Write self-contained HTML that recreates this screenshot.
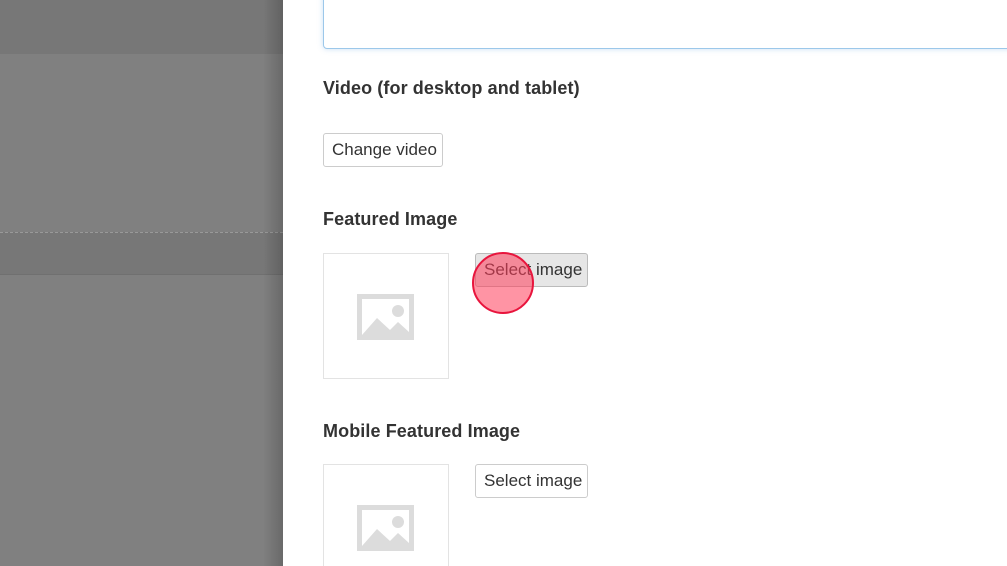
<!DOCTYPE html>
<html style="width:1007px;height:566px;overflow:hidden"><head><style>
*{margin:0;padding:0;box-sizing:border-box}
body{width:1007px;height:566px;overflow:hidden;position:relative;background:#fff;font-family:"Liberation Sans",sans-serif;color:#333}
.a{position:absolute;white-space:nowrap}
.h{font-size:18px;font-weight:bold;color:#333;letter-spacing:0.1px}
.btn{position:absolute;white-space:nowrap;height:34px;border:1px solid #ccc;border-radius:3px;background:#fff;font-size:17px;line-height:32px;padding:0 8px;color:#333;text-align:center}
.ph{position:absolute;width:126px;height:126px;border:1px solid #e3e3e3;background:#fff}
</style></head><body>
<div class="a" style="left:0;top:0;width:283px;height:566px;background:#808080"></div>
<div class="a" style="left:0;top:0;width:283px;height:54px;background:#777"></div>
<div class="a" style="left:0;top:232px;width:283px;height:43px;background:#777;border-top:1px dashed #999;border-bottom:1px solid #707070"></div>
<div class="a" style="left:263px;top:0;width:20px;height:566px;background:linear-gradient(to right,rgba(0,0,0,0),rgba(0,0,0,0.18))"></div>
<div class="a" style="left:323px;top:-10px;width:700px;height:59px;border:1px solid #9cc8ea;border-radius:4px;box-shadow:0 0 6px rgba(100,160,220,0.35);background:#fff"></div>
<div class="a h" style="left:323px;top:78px">Video (for desktop and tablet)</div>
<div class="btn" style="left:323px;top:133px;width:120px">Change video</div>
<div class="a h" style="left:323px;top:209px">Featured Image</div>
<div class="ph" style="left:323px;top:253px"></div>
<svg class="a" style="left:357px;top:294px" width="57" height="46" viewBox="0 0 57 46"><rect width="57" height="46" fill="#dcdcdc"/><rect x="5" y="5" width="47" height="36" fill="#fff"/><path d="M5 41 L20 24 L33 36 L41 28 L52 38 L52 41 Z" fill="#dcdcdc"/><circle cx="41" cy="17" r="6" fill="#dcdcdc"/></svg>
<div class="btn" style="left:475px;top:253px;width:113px;background:#e6e6e6;border-color:#bbb">Select image</div>
<div class="a" style="left:472px;top:252px;width:62px;height:62px;border-radius:50%;background:rgba(255,60,90,0.55);border:2px solid #e8153d"></div>
<div class="a h" style="left:323px;top:421px">Mobile Featured Image</div>
<div class="ph" style="left:323px;top:464px"></div>
<svg class="a" style="left:357px;top:505px" width="57" height="46" viewBox="0 0 57 46"><rect width="57" height="46" fill="#dcdcdc"/><rect x="5" y="5" width="47" height="36" fill="#fff"/><path d="M5 41 L20 24 L33 36 L41 28 L52 38 L52 41 Z" fill="#dcdcdc"/><circle cx="41" cy="17" r="6" fill="#dcdcdc"/></svg>
<div class="btn" style="left:475px;top:464px;width:113px">Select image</div>
</body></html>
